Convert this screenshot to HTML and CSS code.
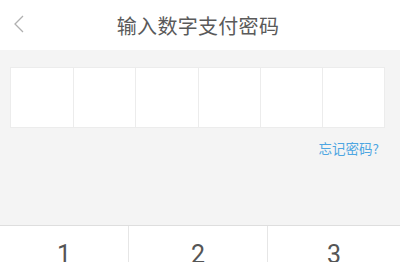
FILE: index.html
```html
<!DOCTYPE html>
<html lang="zh">
<head>
<meta charset="utf-8">
<link rel="stylesheet" href="styles.css">
</head>
<body>
<header class="bar">
  <svg class="back" width="12" height="18" viewBox="0 0 12 18"><path d="M10 1 L2 9 L10 17" fill="none" stroke="#b0b0b0" stroke-width="1.3"/></svg>
  <h1 class="title">输入数字支付密码</h1>
</header>
<main class="body">
  <div class="pin">
    <div class="cell"></div><div class="cell"></div><div class="cell"></div><div class="cell"></div><div class="cell"></div><div class="cell"></div>
  </div>
  <div class="forgot-row"><a class="forgot">忘记密码?</a></div>
</main>
<section class="keypad">
  <div class="key">1</div>
  <div class="key">2</div>
  <div class="key">3</div>
</section>
</body>
</html>
```
FILE: styles.css
```css
html, body { margin: 0; padding: 0; }
body {
  width: 400px;
  height: 262px;
  overflow: hidden;
  background: #f4f4f4;
  font-family: "Noto Sans CJK SC", "Noto Sans", sans-serif;
}
.bar {
  height: 50px;
  background: #fff;
  display: flex;
  align-items: center;
  justify-content: center;
  position: relative;
}
.back {
  position: absolute;
  left: 13px;
  top: 15px;
}
.title {
  margin: 0 0 0 -4px;
  font-size: 20px;
  font-weight: 400;
  color: #5a5a5a;
  letter-spacing: 0.3px;
}
.body {
  height: 175px;
  padding-top: 17px;
  box-sizing: border-box;
}
.pin {
  margin-left: 10px;
  width: 375px;
  height: 61px;
  box-sizing: border-box;
  border: 1px solid #ececec;
  background: #fff;
  display: grid;
  grid-template-columns: repeat(6, 1fr);
}
.cell { border-left: 1px solid #ececec; }
.cell:first-child { border-left: none; }
.forgot-row {
  display: flex;
  justify-content: flex-end;
  padding-right: 21px;
  margin-top: 11px;
}
.forgot {
  font-size: 13.5px;
  line-height: 18px;
  color: #4ea6e2;
}
.keypad {
  border-top: 1px solid #dedede;
  background: #fff;
  display: grid;
  grid-template-columns: 128px 139px 1fr;
  height: 36px;
  overflow: hidden;
}
.key {
  font-family: Roboto, "Noto Sans", sans-serif;
  font-size: 25px;
  line-height: 30px;
  color: #555;
  text-align: center;
  padding-top: 14px;
  border-left: 1px solid #e6e6e6;
}
.key:first-child { border-left: none; }
```
